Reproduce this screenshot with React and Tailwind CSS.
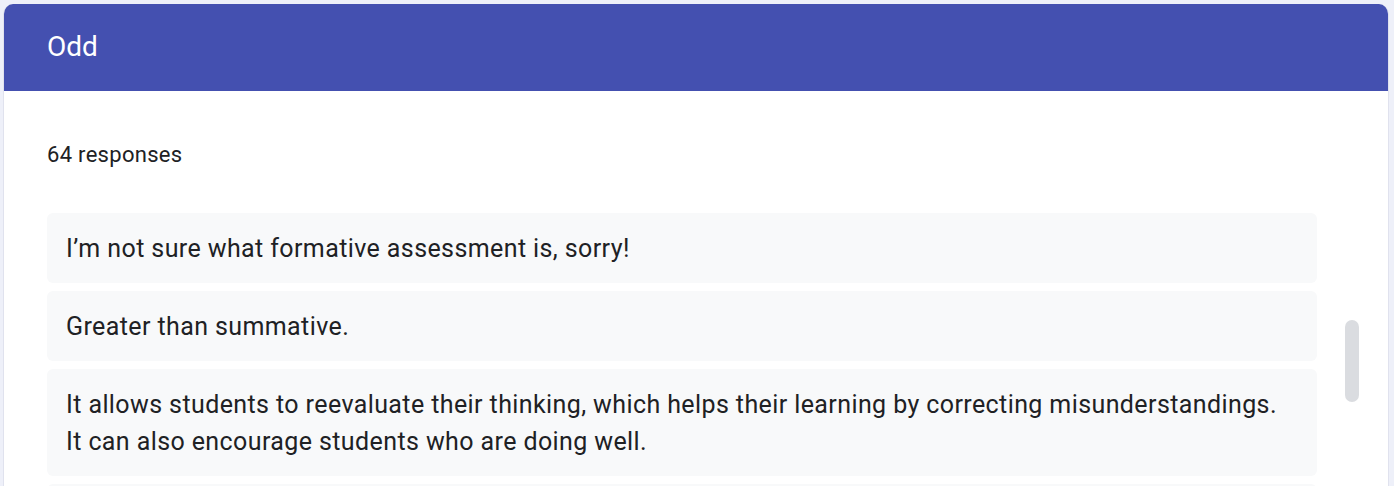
import React from "react";

const responses = [
  "I’m not sure what formative assessment is, sorry!",
  "Greater than summative.",
  "It allows students to reevaluate their thinking, which helps their learning by correcting misunderstandings.\nIt can also encourage students who are doing well.",
  "Students can see where they are and what they need to work on.",
];

const ResponseItem = ({ text }) => {
  return (
    <div className="bg-[#f8f9fa] rounded-[6px] pl-[19px] pr-[16px] py-[16.5px] text-[25px] tracking-[0.4px] leading-[37px] text-[#202124] whitespace-pre-line">
      {text}
    </div>
  );
};

const App = () => {
  return (
    <div
      className="h-[486px] overflow-hidden bg-[#eef0f9] pt-[4px] pl-[3px] pr-[5px]"
      style={{ fontFamily: "Roboto, 'Noto Sans', sans-serif" }}
    >
      <div className="relative h-[600px] bg-white rounded-t-[10px] border-x border-[#e0e2ee] overflow-hidden">
        <div className="h-[87px] bg-[#4450b0] flex items-center pl-[43px] pb-[2px]">
          <h1 className="text-[28px] text-white font-normal">Odd</h1>
        </div>
        <div className="pl-[43px] pr-[71px] pt-[50px]">
          <p className="text-[22px] leading-[28px] tracking-[0.3px] text-[#202124] mb-[44px]">
            64 responses
          </p>
          <div className="flex flex-col gap-[8px]">
            {responses.map((r, i) => (
              <ResponseItem key={i} text={r} />
            ))}
          </div>
        </div>
        <div className="absolute left-[1341px] top-[316px] w-[14px] h-[82px] rounded-full bg-[#dadce0]"></div>
      </div>
    </div>
  );
};

export default App;
